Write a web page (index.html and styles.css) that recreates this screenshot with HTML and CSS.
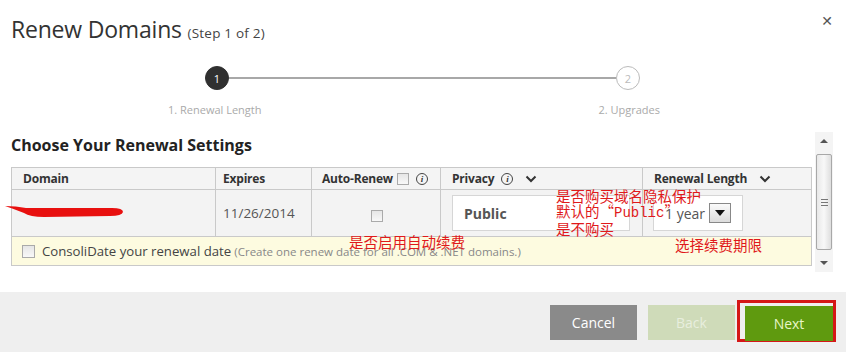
FILE: index.html
```html
<!DOCTYPE html>
<html>
<head>
<meta charset="utf-8">
<link rel="stylesheet" href="styles.css">
</head>
<body>
<div class="modal">
  <div class="head">
    <h1 class="title">Renew Domains <span class="step">(Step 1 of 2)</span></h1>
    <span class="close">&#x2715;</span>
  </div>
  <div class="stepper">
    <div class="track">
      <span class="dot active">1</span>
      <span class="line"></span>
      <span class="dot">2</span>
    </div>
    <div class="labels">
      <span class="lbl">1. Renewal Length</span>
      <span class="lbl">2. Upgrades</span>
    </div>
  </div>
  <div class="settings">
    <div class="content">
      <h2 class="sect">Choose Your Renewal Settings</h2>
      <div class="tablewrap">
        <table class="grid">
          <colgroup>
            <col class="c1"><col class="c2"><col class="c3"><col class="c4"><col class="c5">
          </colgroup>
          <thead>
            <tr>
              <th class="pl">Domain</th>
              <th>Expires</th>
              <th class="ar"><span class="th-in">Auto-Renew <span class="cb"></span> <span class="info">i</span></span></th>
              <th class="pl"><span class="th-in">Privacy <span class="info">i</span> <svg class="chev" width="12" height="8" viewBox="0 0 12 8"><path d="M1.5 1.5 L6 6 L10.5 1.5" fill="none" stroke="#333" stroke-width="2"/></svg></span></th>
              <th class="pl"><span class="th-in">Renewal Length <svg class="chev" width="12" height="8" viewBox="0 0 12 8"><path d="M1.5 1.5 L6 6 L10.5 1.5" fill="none" stroke="#333" stroke-width="2"/></svg></span></th>
            </tr>
          </thead>
          <tbody>
            <tr class="data">
              <td class="dom"></td>
              <td class="exp">11/26/2014</td>
              <td class="ctr"><span class="cb"></span></td>
              <td class="pl"><div class="sel priv">Public</div></td>
              <td class="pl"><div class="sel yr"><span class="yrtxt">1 year</span><span class="ddbtn"><svg width="10" height="6" viewBox="0 0 10 6"><path d="M0 0 H10 L5 6 Z" fill="#111"/></svg></span></div></td>
            </tr>
            <tr class="cons">
              <td colspan="5"><span class="cb big"></span><span class="ctxt">ConsoliDate your renewal date</span> <span class="csub">(Create one renew date for all .COM &amp; .NET domains.)</span></td>
            </tr>
          </tbody>
        </table>
        <svg class="scribble" width="124" height="16" viewBox="0 0 124 16"><path d="M1 3 Q 12 3 22 5 Q 60 5 108 5 Q 119 5 119 9 Q 118 13 106 13 L 40 14 Q 26 14 20 10 Q 10 6 1 3 Z" fill="#e8100f"/></svg>
        <div class="note n1">是否购买域名隐私保护<br>默认的“<span class="mono">Public</span>”<br>是不购买</div>
        <div class="note n2">是否启用自动续费</div>
        <div class="note n3">选择续费期限</div>
      </div>
    </div>
    <div class="sbar">
      <span class="arrow up"></span>
      <span class="thumb"><span class="grip"></span></span>
      <span class="arrow down"></span>
    </div>
  </div>
  <div class="foot">
    <button class="btn cancel">Cancel</button>
    <button class="btn back">Back</button>
    <span class="hl"><button class="btn next">Next</button></span>
  </div>
</div>
</body>
</html>
```
FILE: styles.css
```css
* { box-sizing: border-box; }
html, body { margin: 0; padding: 0; }
body {
  width: 846px; height: 352px; overflow: hidden; background: #fff;
  font-family: "Open Sans", "Noto Sans", "Liberation Sans", sans-serif;
  color: #333;
}
.modal { width: 846px; height: 352px; display: flex; flex-direction: column; }
.head { display: flex; justify-content: space-between; align-items: flex-start; padding: 13px 13px 0 11px; height: 60px; }
.title { margin: 0; font-weight: 400; font-size: 23px; line-height: 32px; color: #333; letter-spacing: -0.2px; }
.step { font-size: 13.5px; color: #444; letter-spacing: 0.2px; }
.close { font-size: 14px; font-weight: 700; color: #555; margin-top: 0; font-family: "DejaVu Sans", sans-serif; }
.stepper { width: 500px; margin-left: 168px; height: 72px; }
.track { display: flex; align-items: center; margin-left: 37px; width: 435px; height: 24px; margin-top: 6px; }
.dot { width: 24px; height: 24px; border-radius: 50%; border: 1px solid #bbb; background: #fff; color: #bbb; font-size: 11px; display: flex; align-items: center; justify-content: center; flex: none; }
.dot.active { background: #303030; border-color: #303030; color: #fff; }
.line { flex: 1; height: 2px; background: #a8a8a8; }
.labels { display: flex; justify-content: space-between; width: 492px; margin-top: 12px; }
.lbl { font-size: 11px; color: #aaa; }
.settings { display: flex; height: 140px; margin-top: 0; }
.content { width: 815px; padding-left: 11px; }
.sect { margin: 0; font-size: 16px; font-weight: 700; color: #222; line-height: 24px; height: 35px; padding-top: 1px; }
.tablewrap { position: relative; width: 800px; }
.grid { width: 800px; border-collapse: collapse; table-layout: fixed; font-size: 12px; }
.c1 { width: 204px; } .c2 { width: 96px; } .c3 { width: 129px; } .c4 { width: 202px; } .c5 { width: 169px; }
.grid th { height: 22px; background: #f4f4f4; border: 1px solid #c9c9c9; text-align: left; font-weight: 700; color: #333; padding: 0 0 0 7px; font-size: 12px; letter-spacing: -0.2px; }
.grid th.pl, .grid td.pl { padding-left: 11px; }
.grid th.ar { padding-left: 10px; }
.th-in { display: inline-flex; align-items: center; gap: 4px; }
.chev { margin-left: 8px; }
.info { width: 12px; height: 12px; border: 1px solid #444; border-radius: 50%; font-size: 9px; font-style: italic; font-family: "Liberation Serif", serif; font-weight: 700; display: inline-flex; align-items: center; justify-content: center; margin-left: 3px; }
.cb { display: inline-block; width: 12px; height: 12px; border: 1px solid #aaa; background: linear-gradient(#e6e6e6, #f8f8f8); vertical-align: middle; }
.grid td { border: 1px solid #c9c9c9; background: #f3f3f3; }
.data td { height: 47px; }
.exp { font-size: 13.5px; color: #555; padding-left: 7px; }
.ctr { text-align: center; }
.ctr .cb { margin-left: 2px; margin-top: 4px; }
.sel { height: 36px; background: #fff; border: 1px solid #d6d6d6; display: flex; align-items: center; }
.priv { width: 178px; font-weight: 700; font-size: 14px; color: #555; padding-left: 11px; }
.yr { width: 90px; padding-left: 11px; font-size: 14px; color: #555; margin-left: -1px; }
.yrtxt { margin-right: 4px; }
.ddbtn { width: 22px; height: 20px; border: 1px solid #888; background: linear-gradient(#fafafa, #dcdcdc); display: flex; align-items: center; justify-content: center; }
.cons td { height: 29px; background: #fdfbe0; padding-left: 10px; border-color: #c9c9c9; }
.cb.big { width: 13px; height: 13px; margin-right: 7px; margin-top: -3px; }
.ctxt { font-size: 13.2px; color: #444; }
.csub { font-size: 11.5px; color: #888; }
.scribble { position: absolute; left: -7px; top: 36px; }
.note { position: absolute; font-family: "Noto Sans CJK SC", sans-serif; color: #e0191b; font-size: 14.5px; line-height: 15px; white-space: nowrap; }
.mono { font-family: "Liberation Mono", monospace; font-size: 14px; }
.n1 { left: 545px; top: 21px; }
.n2 { left: 338px; top: 67px; }
.n3 { left: 664px; top: 70px; }
.sbar { width: 18px; height: 140px; background: #f4f4f4; display: flex; flex-direction: column; align-items: center; justify-content: space-between; padding: 3px 0; }
.arrow { width: 0; height: 0; border-left: 4px solid transparent; border-right: 4px solid transparent; margin: 4px 0; }
.arrow.up { border-bottom: 4px solid #555; }
.arrow.down { border-top: 4px solid #555; }
.thumb { width: 16px; height: 96px; border: 1px solid #a8a8a8; border-radius: 2px; background: linear-gradient(90deg, #e8e8e8, #f8f8f8 50%, #dedede); display: flex; align-items: center; justify-content: center; }
.grip { width: 7px; height: 7px; border-top: 1px solid #777; border-bottom: 1px solid #777; position: relative; }
.grip::after { content: ""; position: absolute; left: 0; right: 0; top: 2px; border-top: 1px solid #777; }
.foot { margin-top: auto; height: 60px; background: #efefef; display: flex; justify-content: flex-end; align-items: center; padding-right: 10px; gap: 11px; }
.btn { width: 87px; height: 35px; border: 0; font-family: inherit; font-size: 14px; color: #fff; padding: 0; }
.cancel { background: #8a8a8a; }
.back { background: #cfdbb9; color: #e8eede; }
.next { background: #5f9a0f; color: #e8f6c8; width: 88px; }
.hl { display: flex; justify-content: flex-end; align-items: center; width: 99px; height: 42px; border: 3px solid #d51717; margin-left: -9px; margin-top: -2px; }
.hl .next { height: 35px; margin-top: 4px; }
```
